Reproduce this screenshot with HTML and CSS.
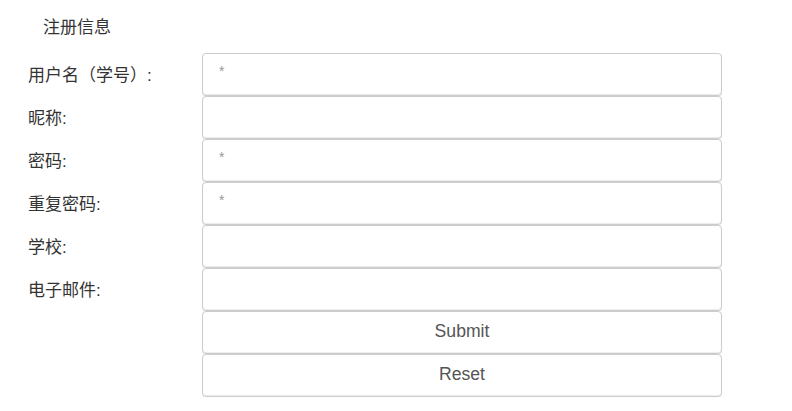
FILE: index.html
```html
<!DOCTYPE html>
<html lang="zh">
<head>
<meta charset="utf-8">
<link rel="stylesheet" href="styles.css">
</head>
<body>
<div class="page">
  <div class="title">注册信息</div>
  <form class="form">
    <label class="label">用户名（学号）:</label>
    <input class="field" type="text" placeholder="*">
    <label class="label">昵称:</label>
    <input class="field" type="text">
    <label class="label">密码:</label>
    <input class="field" type="password" placeholder="*">
    <label class="label">重复密码:</label>
    <input class="field" type="password" placeholder="*">
    <label class="label">学校:</label>
    <input class="field" type="text">
    <label class="label">电子邮件:</label>
    <input class="field" type="text">
    <span></span>
    <button class="btn" type="button">Submit</button>
    <span></span>
    <button class="btn" type="button">Reset</button>
  </form>
</div>
</body>
</html>
```
FILE: styles.css
```css
html, body {
  margin: 0;
  padding: 0;
  background: #fff;
}
body {
  font-family: "Liberation Sans", "Noto Sans CJK SC", sans-serif;
  color: #333;
  font-size: 17px;
}
.page {
  padding: 15px 0 0 28px;
}
.title {
  padding-left: 15px;
  height: 25px;
  line-height: 25px;
  font-size: 17px;
  color: #333;
  margin-bottom: 13px;
}
.form {
  display: grid;
  grid-template-columns: 174px 520px;
  grid-auto-rows: 43px;
}
.label {
  display: flex;
  align-items: center;
  font-size: 17px;
  color: #333;
  padding-bottom: 2px;
}
.field, .btn {
  box-sizing: border-box;
  width: 520px;
  height: 43px;
  margin: 0;
  border: 1px solid #ccc;
  border-radius: 4px;
  background: #fff;
  box-shadow: inset 0 -1px 1px rgba(0,0,0,0.08), 0 1px 1px rgba(0,0,0,0.06);
  font-family: "Liberation Sans", sans-serif;
  outline: none;
}
.field {
  padding: 0 16px 8px;
  font-size: 14px;
  color: #555;
}
.field::placeholder {
  color: #999;
}
.btn {
  font-size: 17.6px;
  color: #555;
  text-align: center;
  padding: 0 0 2px;
}
```
